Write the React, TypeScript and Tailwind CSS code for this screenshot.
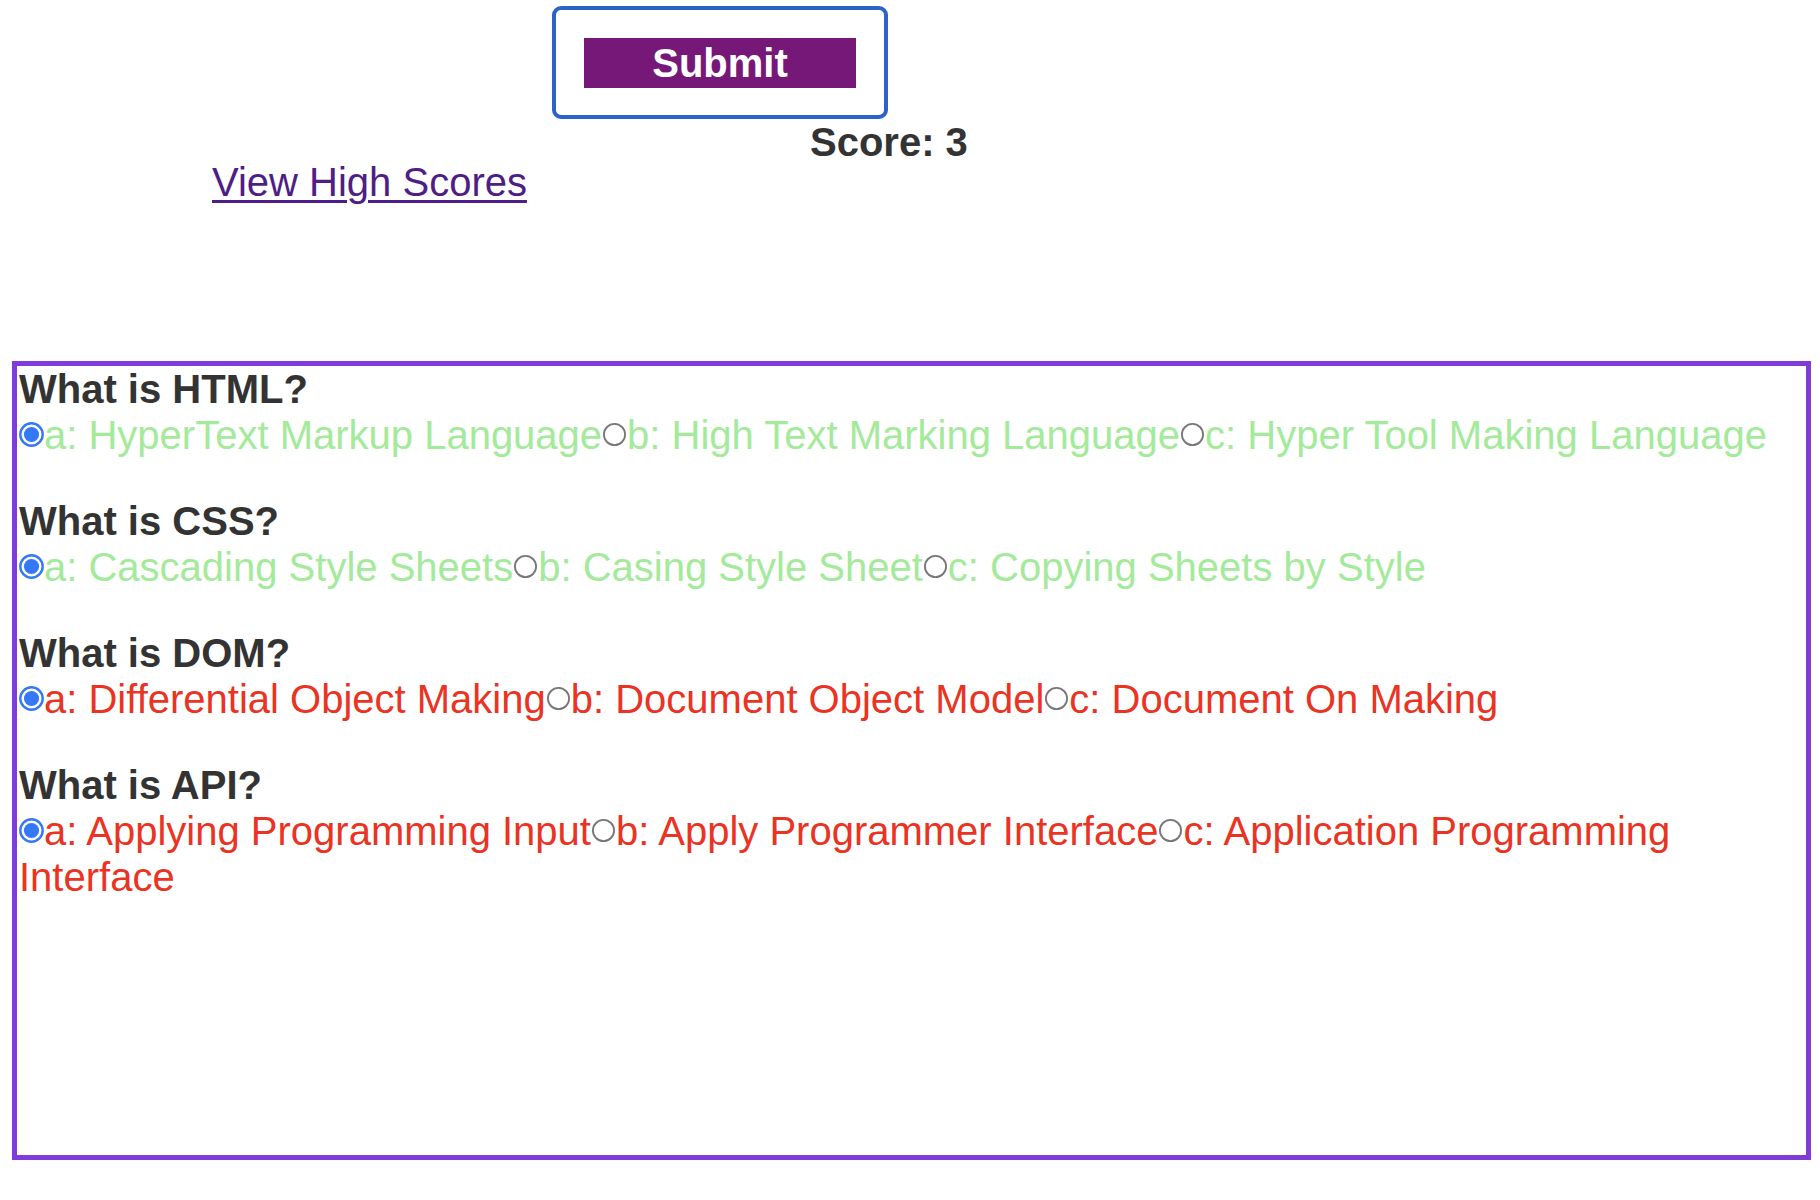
import React from 'react';

type Question = {
  title: string;
  answers: string[];
  picked: number;
  correct: boolean;
};

const questions: Question[] = [
  {
    title: 'What is HTML?',
    answers: ['a: HyperText Markup Language', 'b: High Text Marking Language', 'c: Hyper Tool Making Language'],
    picked: 0,
    correct: true,
  },
  {
    title: 'What is CSS?',
    answers: ['a: Cascading Style Sheets', 'b: Casing Style Sheet', 'c: Copying Sheets by Style'],
    picked: 0,
    correct: true,
  },
  {
    title: 'What is DOM?',
    answers: ['a: Differential Object Making', 'b: Document Object Model', 'c: Document On Making'],
    picked: 0,
    correct: false,
  },
  {
    title: 'What is API?',
    answers: ['a: Applying Programming Input', 'b: Apply Programmer Interface', 'c: Application Programming Interface'],
    picked: 0,
    correct: false,
  },
];

// radio button drawn as svg so it sits on the text baseline
function Radio({ checked }: { checked: boolean }) {
  return (
    <svg viewBox="0 0 25 25" className="inline-block align-[2px] w-[25px] h-[25px]">
      {checked ? (
        <>
          <circle cx="12.5" cy="12.5" r="11.2" fill="white" stroke="#3478f6" strokeWidth="2.4" />
          <circle cx="12.5" cy="12.5" r="7.6" fill="#3478f6" />
        </>
      ) : (
        <circle cx="12.5" cy="12.5" r="10.6" fill="white" stroke="#767676" strokeWidth="1.8" />
      )}
    </svg>
  );
}

export default function App() {
  return (
    <div className="bg-white w-[1820px] min-h-[1200px] font-['Liberation_Sans',Arial,sans-serif] text-[40px] leading-[46px] text-[#333]">
      {/* header */}
      <div className="flex items-start h-[361px]">
        <div className="w-[552px] pl-[212px] pt-[159px]">
          <a href="#" className="text-[#4e1e86] underline decoration-[3px] underline-offset-[4px] whitespace-nowrap">
            View High Scores
          </a>
        </div>
        <div className="pt-[6px]">
          <div className="w-[336px] h-[113px] border-4 border-[#2c63c8] rounded-[9px] p-[28px]">
            <button className="w-[272px] h-[50px] bg-[#751878] text-white font-bold text-[40px] leading-[46px]">
              Submit
            </button>
          </div>
          <div className="ml-[258px] font-bold whitespace-nowrap">Score: 3</div>
        </div>
      </div>

      {/* quiz */}
      <div className="ml-[12px] w-[1799px] h-[799px] border-[5px] border-[#803bdb] pl-[2px]">
        {questions.map((q) => (
          <div key={q.title} className="mb-[40px]">
            <div className="font-bold">{q.title}</div>
            <div className={q.correct ? 'text-[#a4ea9b]' : 'text-[#ea3323]'}>
              {q.answers.map((a, i) => (
                <React.Fragment key={a}>
                  <Radio checked={i === q.picked} />
                  <span>{a}</span>
                </React.Fragment>
              ))}
            </div>
          </div>
        ))}
      </div>
    </div>
  );
}
